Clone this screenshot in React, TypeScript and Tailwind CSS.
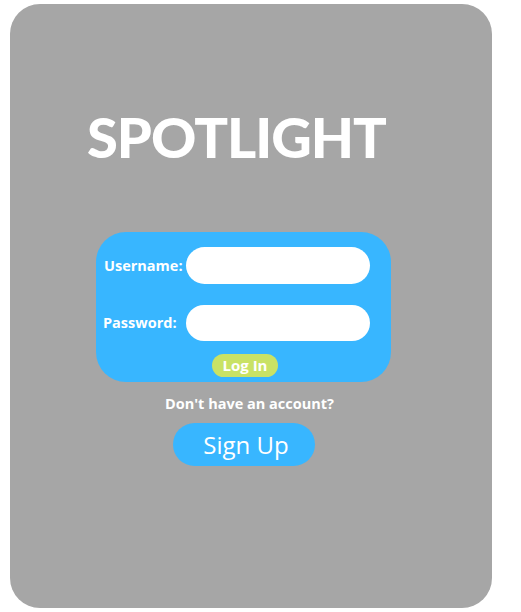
export default function App() {
  return (
    <div className="w-[521px] h-[612px] bg-white pl-[10px] pt-[4px]">
      <div className="w-[482px] h-[604px] bg-[#a6a6a6] rounded-[30px] flex flex-col items-start">
        {/* Title */}
        <h1
          className="ml-[77px] mt-[96px] text-[56px] leading-[74px] font-black text-white tracking-[-1px]"
          style={{ fontFamily: 'Lato, "Open Sans", sans-serif' }}
        >
          SPOTLIGHT
        </h1>

        {/* Login form */}
        <div
          className="ml-[86px] mt-[58px] w-[295px] h-[150px] bg-[#38b6ff] rounded-[30px] flex flex-col pt-[15px]"
          style={{ fontFamily: '"Open Sans", sans-serif' }}
        >
          <div className="flex items-center">
            <label className="w-[90px] pl-[8px] text-[14.5px] font-bold text-white">Username:</label>
            <input className="w-[184px] h-[37px] bg-white rounded-full outline-none px-4" />
          </div>
          <div className="flex items-center mt-[21px]">
            <label className="w-[90px] pl-[7px] text-[14.5px] font-bold text-white">Password:</label>
            <input type="password" className="w-[184px] h-[36px] bg-white rounded-full outline-none px-4" />
          </div>
          <button className="ml-[116px] mt-[13px] w-[66px] h-[23px] bg-[#c9e265] rounded-full text-white text-[15px] font-bold leading-[23px]">
            Log In
          </button>
        </div>

        <p
          className="ml-[155px] mt-[11px] text-[14.5px] font-bold text-white"
          style={{ fontFamily: '"Open Sans", sans-serif' }}
        >
          Don't have an account?
        </p>

        <button
          className="ml-[163px] mt-[8px] w-[142px] h-[43px] bg-[#38b6ff] rounded-full text-white text-[24px] leading-[43px] pl-[4px]"
          style={{ fontFamily: '"Open Sans", sans-serif' }}
        >
          Sign Up
        </button>
      </div>
    </div>
  )
}
